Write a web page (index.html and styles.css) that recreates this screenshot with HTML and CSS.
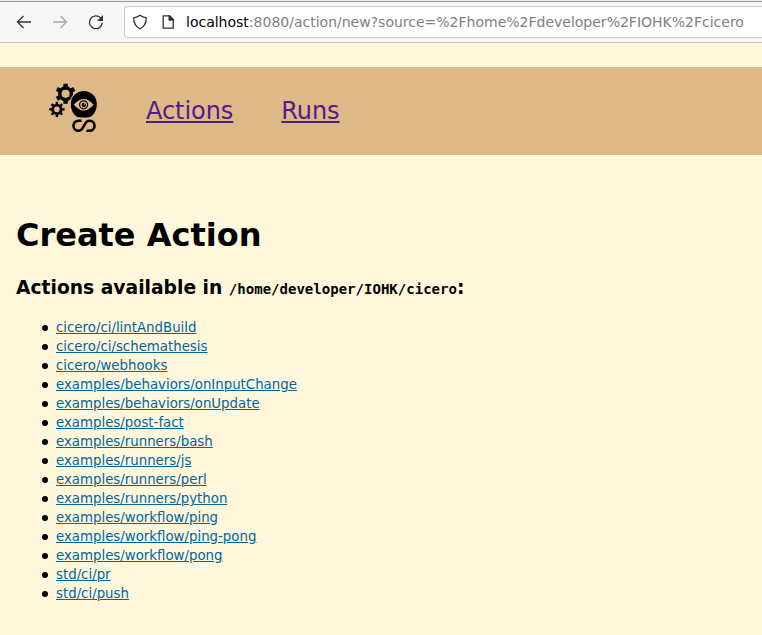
FILE: index.html
```html
<!DOCTYPE html>
<html lang="en">
<head>
<meta charset="utf-8">
<title>Cicero</title>
<link rel="stylesheet" href="styles.css">
</head>
<body>
<div class="toolbar">
  <svg class="tool" viewBox="0 0 16 16"><path d="M15 8H1.5M7.5 2L1.5 8l6 6"/></svg>
  <svg class="tool disabled" viewBox="0 0 16 16"><path d="M1 8h13.5M8.5 2l6 6-6 6"/></svg>
  <svg class="tool" viewBox="0 0 16 16"><path d="M14.3 8.8A6.4 6.4 0 1 1 12.6 3.9"/><path class="solid" d="M15 1v6H9z"/></svg>
  <div class="urlbar">
    <svg class="tool" viewBox="0 0 16 16"><path d="M8 1.2C9.8 2.7 12 3.5 14.3 3.8C14.3 9 12 13 8 14.8C4 13 1.7 9 1.7 3.8C4 3.5 6.2 2.7 8 1.2z"/></svg>
    <svg class="tool page" viewBox="0 0 16 16"><path d="M3.2 1.8h6l4 4v8.4h-10z"/><path class="solid" d="M8.5 1.2h1.5l4 4v1.5H8.5z"/></svg>
    <div class="url"><span class="host">localhost</span>:8080/action/new?source=%2Fhome%2Fdeveloper%2FIOHK%2Fcicero</div>
  </div>
</div>
<nav class="nav">
  <svg class="logo" viewBox="48 86 50 50">
    <g transform="translate(0 3)">
      <g transform="translate(65.6 93.8)">
        <circle class="ring" r="5.8"/>
        <path class="teeth" d="M0-6v-4M0 6v4M5.2-3l3.5-2M5.2 3l3.5 2M-5.2-3l-3.5-2M-5.2 3l-3.5 2"/>
      </g>
      <g transform="translate(56.9 109.4)">
        <circle class="ring small" r="4.2"/>
        <path class="teeth small" d="M0-5v-2.7M0 5v2.7M-5 0h-2.7M5 0h2.7M3.5-3.5l1.8-1.8M3.5 3.5l1.8 1.8M-3.5-3.5l-1.8-1.8M-3.5 3.5l-1.8 1.8"/>
      </g>
      <circle class="gap" cx="83.8" cy="104" r="14"/>
      <path d="M76.5 116.500C72.5 113.5 70.8 109 70.8 104a13 13 0 0 1 26 0c0 5-1.7 9.5-5.7 12.5-2 1.3-12.6 1.3-14.6 0z"/>
      <path class="eye" d="M73.8 104.8q9.9-11.5 19.800 0q-9.9 11.5-19.8 0z"/>
      <circle class="iris" cx="83.6" cy="104.8" r="4"/>
      <circle cx="83.8" cy="105" r="2.2"/>
      <circle class="eye" cx="84.5" cy="104" r=".8"/>
      <path class="curl" d="M81.500 120.700h-3a5 5 0 0 0 0 10.100c6.500 0 4.500-10.100 11-10.100a5 5 0 0 1 0 10.100H86.500"/>
    </g>
  </svg>
  <a href="#">Actions</a>
  <a href="#">Runs</a>
</nav>
<main>
  <h1>Create Action</h1>
  <h2>Actions available in <code>/home/developer/IOHK/cicero</code>:</h2>
  <ul>
    <li><a href="#">cicero/ci/lintAndBuild</a></li>
    <li><a href="#">cicero/ci/schemathesis</a></li>
    <li><a href="#">cicero/webhooks</a></li>
    <li><a href="#">examples/behaviors/onInputChange</a></li>
    <li><a href="#">examples/behaviors/onUpdate</a></li>
    <li><a href="#">examples/post-fact</a></li>
    <li><a href="#">examples/runners/bash</a></li>
    <li><a href="#">examples/runners/js</a></li>
    <li><a href="#">examples/runners/perl</a></li>
    <li><a href="#">examples/runners/python</a></li>
    <li><a href="#">examples/workflow/ping</a></li>
    <li><a href="#">examples/workflow/ping-pong</a></li>
    <li><a href="#">examples/workflow/pong</a></li>
    <li><a href="#">std/ci/pr</a></li>
    <li><a href="#">std/ci/push</a></li>
  </ul>
</main>
</body>
</html>
```
FILE: styles.css
```css
* { box-sizing: border-box; }
body {
  margin: 0;
  background: #fff7dc;
  color: #000;
  font-family: "DejaVu Sans", sans-serif;
  overflow: hidden;
}
.toolbar {
  display: flex;
  align-items: center;
  height: 43px;
  padding: 1px 0 0 16px;
  gap: 20px;
  background: #f6f6f6;
  border-top: 1px solid #eee;
  border-bottom: 1px solid #cdc6c2;
  box-shadow: inset 0 1px #949796;
}
.tool {
  flex: none;
  width: 16px;
  height: 16px;
  fill: none;
  stroke: #2e3436;
  stroke-width: 1.3;
}
.tool .solid { fill: #2e3436; stroke: none; }
.disabled { opacity: .4; }
.urlbar {
  display: flex;
  align-items: center;
  flex: 1;
  height: 32px;
  padding-left: 7px;
  background: #fff;
  border: 1px solid #cdc6c2;
  border-right: 0;
  border-radius: 4px 0 0 4px;
}
.page { margin: 0 10px 0 12px; }
.url { font-size: 14px; color: #808080; white-space: nowrap; }
.host { color: #000; }
.nav {
  display: flex;
  align-items: center;
  height: 88px;
  margin-top: 24px;
  padding-left: 48px;
  gap: 48px;
  background: #deb887;
  font-size: 24px;
}
.nav a { color: #551a8b; letter-spacing: -.06px; }
.logo { width: 50px; height: 50px; overflow: visible; transform: translateY(-3px); }
.ring { fill: none; stroke: #000; stroke-width: 3.4; }
.teeth { fill: none; stroke: #000; stroke-width: 4.4; }
.ring.small { stroke-width: 2.8; }
.teeth.small { stroke-width: 2.4; }
.eye { fill: #deb887; }
.gap { fill: #deb887; }
.iris { fill: none; stroke: #000; stroke-width: 1.2; }
.curl { fill: none; stroke: #000; stroke-width: 2.6; }
main { padding: 61px 16px 0; }
h1 { margin: 0; font-size: 32px; line-height: 38px; }
h2 { margin: 23px 0 0; font-size: 18.72px; line-height: 22px; }
code { font-family: "DejaVu Sans Mono", monospace; font-size: 14.04px; }
ul { margin: 18px 0 0; padding-left: 26px; list-style: none; font-size: 13.33px; line-height: 19px; }
li { display: flex; align-items: center; height: 19px; }
li::before { content: ""; width: 6px; height: 6px; margin-right: 8px; border-radius: 50%; background: #000; }
li a { color: #00659c; }
```
